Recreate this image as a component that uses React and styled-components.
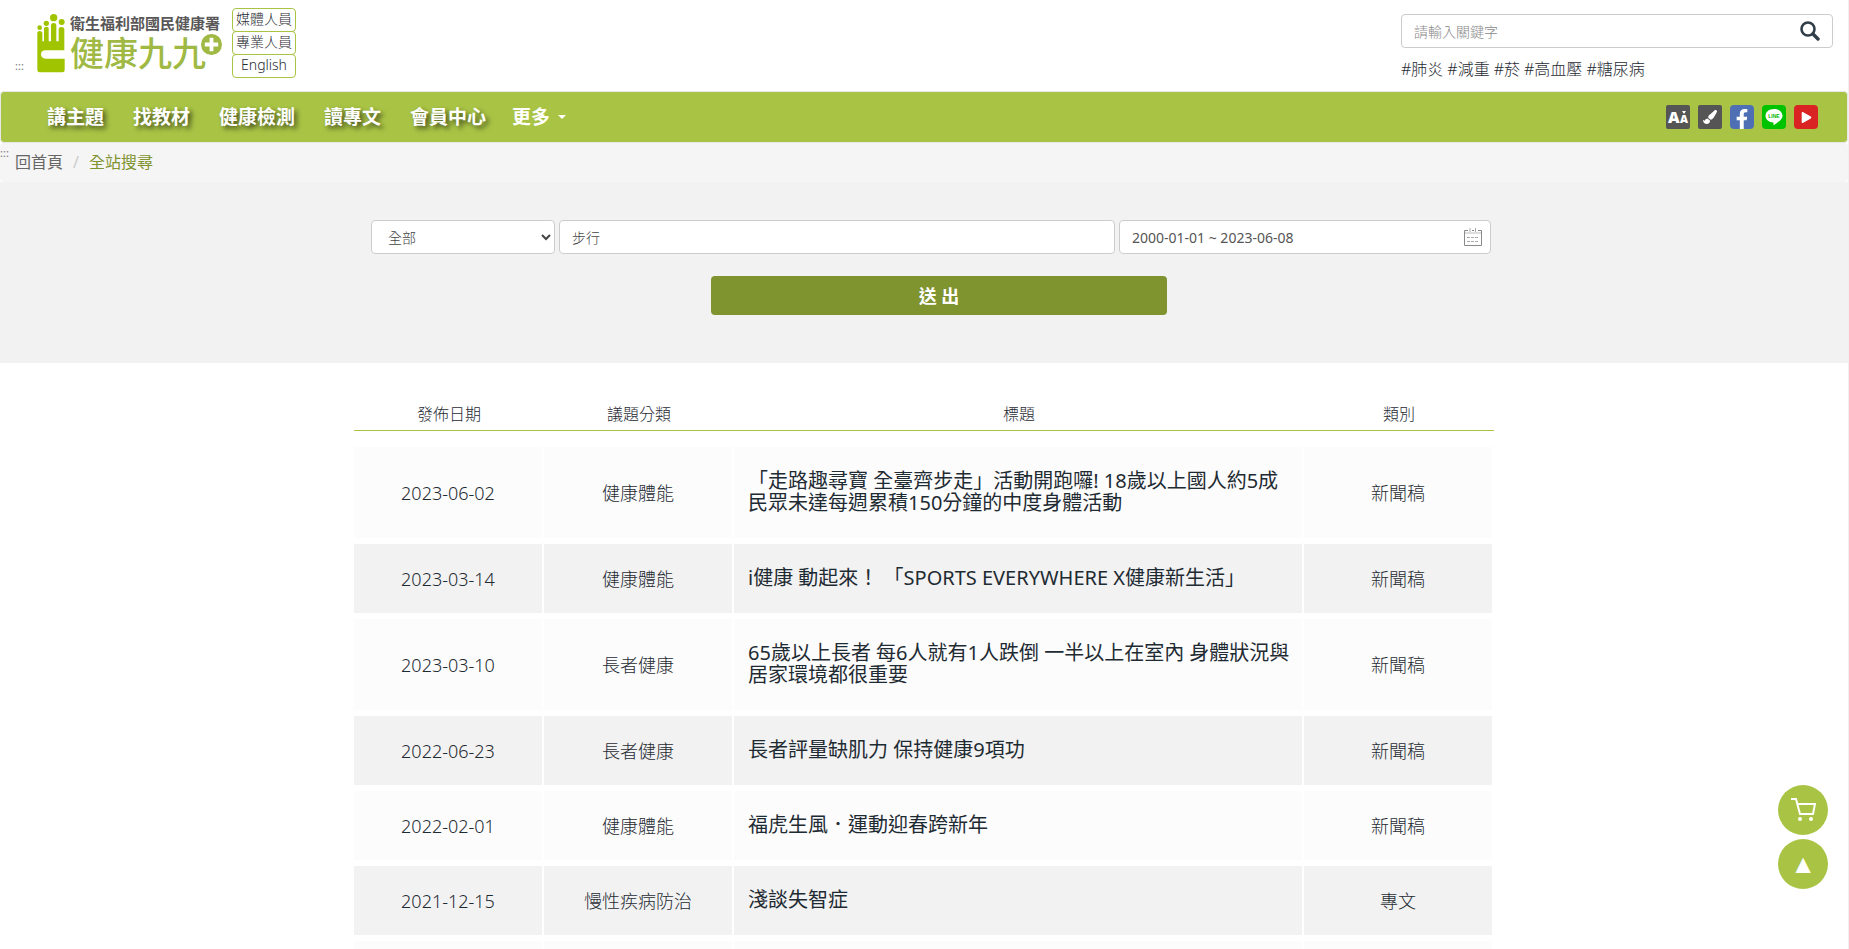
import React from 'react';
import styled, { createGlobalStyle, css } from 'styled-components';
import { FaFacebookF, FaPaintBrush, FaPlay } from 'react-icons/fa';

const GlobalStyle = createGlobalStyle`
  * {
    box-sizing: border-box;
  }

  body {
    margin: 0;
    background: #ffffff;
    color: #1f2b33;
    font-family: 'Noto Sans', 'Noto Sans CJK TC', sans-serif;
    font-size: 16px;
    font-weight: 300;
    line-height: 22px;
  }

  a {
    color: inherit;
    text-decoration: none;
  }

  input, select, button {
    font-family: inherit;
    font-weight: inherit;
  }
`;

const Page = styled.div`
  border-right: 1px solid #f0f0f0;
`;

const Header = styled.header`
  display: flex;
  justify-content: space-between;
  align-items: flex-start;
  height: 91px;
  padding: 0 15px;
`;

const Brand = styled.div`
  display: flex;
  align-items: flex-start;
  padding-top: 8px;
`;

const AccessKey = styled.a`
  color: #777777;
  font-size: 11px;
  font-weight: 400;
  line-height: 16px;
`;

const HeaderAccessKey = styled(AccessKey)`
  width: 22px;
  padding-top: 50px;
`;

const Logo = styled.a`
  display: flex;
  gap: 5px;
  padding-top: 6px;
`;

const LogoText = styled.span`
  display: flex;
  flex-direction: column;
  width: 155px;
  font-family: 'Liberation Sans', 'Noto Sans CJK TC', sans-serif;
`;

const LogoOrg = styled.span`
  color: #595757;
  font-size: 15px;
  font-weight: 700;
  line-height: 20px;
  white-space: nowrap;
`;

const LogoName = styled.span`
  display: flex;
  align-items: flex-start;
  color: #9fb944;
  font-size: 34px;
  font-weight: 500;
  line-height: 40px;
  white-space: nowrap;
`;

const LogoPlus = styled.svg`
  flex: none;
  margin-left: -5px;
`;

const AudienceLinks = styled.nav`
  display: flex;
  flex-direction: column;
  margin-left: 7px;
`;

const AudienceLink = styled.a`
  width: 64px;
  height: 24px;
  border: 1px solid #a9c445;
  border-radius: 4px;
  font-size: 14px;
  line-height: 20px;
  text-align: center;

  & + & {
    margin-top: -1px;
  }
`;

const SiteSearch = styled.form`
  width: 432px;
  padding-top: 14px;
`;

const SearchBox = styled.div`
  display: flex;
  align-items: center;
  height: 34px;
  padding-right: 12px;
  border: 1px solid #cccccc;
  border-radius: 4px;
`;

const SearchInput = styled.input`
  flex: 1;
  min-width: 0;
  padding: 0 12px;
  border: 0;
  outline: 0;
  background: transparent;
  font-size: 14px;

  &::placeholder {
    color: #888888;
  }
`;

const IconButton = styled.button`
  display: flex;
  padding: 0;
  border: 0;
  background: transparent;
  cursor: pointer;
`;

const HotTags = styled.div`
  display: flex;
  gap: 4px;
  margin-top: 10px;
`;

const Navbar = styled.nav`
  display: flex;
  justify-content: space-between;
  align-items: center;
  height: 52px;
  padding: 0 29px 0 31px;
  border: 1px solid #e7e7e7;
  border-radius: 4px;
  background: #a9c445;
`;

const Menu = styled.ul`
  display: flex;
  margin: 0;
  padding: 0;
  list-style: none;
`;

const MenuLink = styled.a`
  display: flex;
  align-items: center;
  padding: 0 14px 0 15px;
  color: #ffffff;
  font-size: 19px;
  font-weight: 700;
  text-shadow: 3px 3px 5px rgba(0, 0, 0, 0.6);
`;

const MoreLink = styled(MenuLink)`
  padding-left: 12px;
  text-shadow: none;
`;

const Caret = styled.span`
  margin-left: 8px;
  border-top: 4px solid #ffffff;
  border-right: 4px solid transparent;
  border-left: 4px solid transparent;
`;

const Tools = styled.div`
  display: flex;
  gap: 8px;
`;

const Tool = styled.a`
  display: flex;
  align-items: ${({ $align }) => $align || 'center'};
  justify-content: center;
  width: 24px;
  height: 24px;
  overflow: hidden;
  border-radius: ${({ $radius }) => $radius || 4}px;
  background: ${({ $color }) => $color};
  color: #ffffff;
`;

const Breadcrumb = styled.nav`
  display: flex;
  height: 39px;
  border-radius: 4px;
  background: #f5f5f5;
  color: #666666;
`;

const BreadcrumbKey = styled(AccessKey)`
  width: 15px;
  padding-top: 2px;
`;

const Trail = styled.ol`
  display: flex;
  margin: 0;
  padding: 8px 0;
  font-weight: 400;
  list-style: none;

  li + li::before {
    content: '/';
    padding: 0 10px;
    color: #cccccc;
  }
`;

const Current = styled.li`
  color: #7f932f;
`;

const FilterPanel = styled.section`
  height: 181px;
  padding-top: 38px;
  background: #f2f2f2;
`;

const FilterForm = styled.form`
  max-width: 1140px;
  margin: 0 auto;
`;

const FilterFields = styled.div`
  display: grid;
  grid-template-columns: 184px 1fr 372px;
  gap: 4px;
  padding: 0 3px 0 17px;
`;

const control = css`
  width: 100%;
  height: 34px;
  padding: 0 12px;
  border: 1px solid #cccccc;
  border-radius: 4px;
  background: #ffffff;
  color: #444444;
  font-size: 14px;
`;

const Select = styled.select`
  ${control}
  padding: 0 0 0 12px;
`;

const TextInput = styled.input`
  ${control}
`;

const DateField = styled.div`
  ${control}
  display: flex;
  align-items: center;
  padding: 0 7px 0 0;
`;

const DateInput = styled(SearchInput)`
  color: #555555;
  font-weight: 400;
`;

const SubmitRow = styled.div`
  display: flex;
  justify-content: center;
  padding: 22px 0 0 30px;
`;

const Submit = styled.button`
  width: 456px;
  height: 39px;
  padding: 0 0 2px;
  border: 0;
  border-radius: 4px;
  background: #7f932f;
  color: #ffffff;
  font-size: 18px;
  font-weight: 700;
`;

const Results = styled.table`
  width: 1140px;
  max-width: 100%;
  margin: 33px auto 0;
  border-collapse: separate;
  border-spacing: 0;
  table-layout: fixed;

  tbody::before {
    content: '';
    display: block;
    height: 16px;
  }
`;

const HeadCell = styled.th`
  width: ${({ $width }) => $width};
  height: 35px;
  padding: 7px 0 5px;
  border-bottom: 1px solid #a9c445;
  font-size: 16px;
  font-weight: 300;
`;

const Row = styled.tr`
  background: #fcfcfc;

  &:nth-child(even) {
    background: #f2f2f2;
  }
`;

const Cell = styled.td`
  height: 75px;
  padding: 24px 0 23px;
  border-right: 2px solid #ffffff;
  border-bottom: 6px solid #ffffff;
  font-size: 18px;
  text-align: center;
`;

const TitleCell = styled(Cell)`
  padding: 23px 8px 24px 14px;
  font-size: 20px;
  font-weight: 400;
  text-align: left;
`;

const Floating = styled.aside`
  position: fixed;
  right: 21px;
  bottom: 60px;
  display: flex;
  flex-direction: column;
  gap: 4px;
`;

const RoundLink = styled.a`
  display: flex;
  align-items: center;
  justify-content: center;
  width: 50px;
  height: 50px;
  border-radius: 50%;
  background: #a9c445;
  color: #ffffff;
  font-family: 'DejaVu Sans', sans-serif;
  font-size: 26px;
`;

const HandMark = () => (
  <svg width="28" height="59" viewBox="0 0 84 177" fill="#a0c400" aria-hidden="true">
    <circle cx="8" cy="41" r="7" />
    <circle cx="28" cy="28" r="8" />
    <circle cx="50" cy="11" r="11" />
    <circle cx="74" cy="24" r="9" />
    <path d="M1 56q0-5 7-5t8 5v26h5V43q0-5 7-5t7 5v39h7V33q0-6 8-6t8 6v49h7V45q0-6 8-6t9 6v64H26q-14 0-14 12t14 13h57v34q0 7-7 7H8q-7 0-7-7z" />
  </svg>
);

const SearchIcon = () => (
  <svg width="20" height="20" viewBox="0 0 20 20" fill="none" stroke="#2f3e48" aria-hidden="true">
    <circle cx="8" cy="8" r="6.5" strokeWidth="2.6" />
    <path d="M13 13l5 5" strokeWidth="3.4" strokeLinecap="round" />
  </svg>
);

const CalendarIcon = () => (
  <svg width="20" height="20" viewBox="0 0 20 20" fill="none" stroke="#8a8a8a" aria-hidden="true">
    <path d="M5 3.5H1.500v15h17v-15H15M9 3.500h2" />
    <path d="M7 1v4M12.500 1v4" stroke="#aaaaaa" />
    <path d="M2 6h16" stroke="#dddddd" strokeWidth="2" />
    <path d="M4 10.500h12M4 14.500h12" stroke="#aaaaaa" strokeDasharray="3 1" />
  </svg>
);

const CartIcon = () => (
  <svg width="26" height="26" viewBox="0 0 26 26" fill="none" stroke="#ffffff" strokeWidth="2" aria-hidden="true">
    <path d="M1 2h5l4 15h13l2-10H7" />
    <circle cx="10" cy="22" r="2" fill="#ffffff" stroke="none" />
    <circle cx="21" cy="22" r="2" fill="#ffffff" stroke="none" />
  </svg>
);

const FontSizeIcon = () => (
  <svg width="24" height="24" viewBox="0 0 24 24" fill="#ffffff" aria-hidden="true">
    <text x="2" y="18" fontFamily="Open Sans, sans-serif" fontSize="16" fontWeight="800">A</text>
    <text x="14" y="18" fontFamily="Open Sans, sans-serif" fontSize="11" fontWeight="800">A</text>
    <path d="M16 6h4l-2 3z" />
  </svg>
);

const LineIcon = () => (
  <svg width="24" height="24" viewBox="0 0 24 24" aria-hidden="true">
    <path d="M12 4c5 0 8.500 2.900 8.500 6.800 0 3.200-3.600 6.300-8.500 9.200-.6.300-.6-.2-.5-2.400C7 17.400 3.500 14.700 3.500 10.800 3.500 6.900 7 4 12 4z" fill="#ffffff" />
    <text x="12" y="13" fill="#00b900" fontFamily="Liberation Sans, sans-serif" fontSize="5" fontWeight="700" textAnchor="middle">LINE</text>
  </svg>
);

const menu = ['講主題', '找教材', '健康檢測', '讀專文', '會員中心'];

const tags = ['#肺炎', '#減重', '#菸', '#高血壓', '#糖尿病'];

const columns = [
  { label: '發佈日期', width: '190px' },
  { label: '議題分類', width: '190px' },
  { label: '標題', width: 'auto' },
  { label: '類別', width: '190px' },
];

const results = [
  {
    date: '2023-06-02',
    topic: '健康體能',
    title: '「走路趣尋寶 全臺齊步走」活動開跑囉! 18歲以上國人約5成民眾未達每週累積150分鐘的中度身體活動',
    type: '新聞稿',
  },
  { date: '2023-03-14', topic: '健康體能', title: 'i健康 動起來！ 「SPORTS EVERYWHERE X健康新生活」', type: '新聞稿' },
  {
    date: '2023-03-10',
    topic: '長者健康',
    title: '65歲以上長者 每6人就有1人跌倒 一半以上在室內 身體狀況與居家環境都很重要',
    type: '新聞稿',
  },
  { date: '2022-06-23', topic: '長者健康', title: '長者評量缺肌力 保持健康9項功', type: '新聞稿' },
  { date: '2022-02-01', topic: '健康體能', title: '福虎生風．運動迎春跨新年', type: '新聞稿' },
  { date: '2021-12-15', topic: '慢性疾病防治', title: '淺談失智症', type: '專文' },
  { date: '', topic: '', title: '', type: '' },
];

const App = () => {
  return (
    <Page lang="zh-Hant">
      <GlobalStyle />
      <Header>
        <Brand>
          <HeaderAccessKey href="#top">:::</HeaderAccessKey>
          <Logo href="#home">
            <HandMark />
            <LogoText>
              <LogoOrg>衛生福利部國民健康署</LogoOrg>
              <LogoName>
                健康九九
                <LogoPlus width="21" height="21" viewBox="0 0 22 22" aria-hidden="true">
                  <circle cx="11" cy="11" r="11" fill="#9fb944" />
                  <path d="M11 4v14M4 11h14" stroke="#ffffff" strokeWidth="4" />
                </LogoPlus>
              </LogoName>
            </LogoText>
          </Logo>
          <AudienceLinks>
            <AudienceLink href="#media">媒體人員</AudienceLink>
            <AudienceLink href="#professional">專業人員</AudienceLink>
            <AudienceLink href="#english">English</AudienceLink>
          </AudienceLinks>
        </Brand>
        <SiteSearch>
          <SearchBox>
            <SearchInput type="text" placeholder="請輸入關鍵字" aria-label="請輸入關鍵字" />
            <IconButton type="button" aria-label="搜尋">
              <SearchIcon />
            </IconButton>
          </SearchBox>
          <HotTags>
            {tags.map((tag) => (
              <a key={tag} href="#tag">{tag}</a>
            ))}
          </HotTags>
        </SiteSearch>
      </Header>

      <Navbar>
        <Menu>
          {menu.map((item) => (
            <li key={item}>
              <MenuLink href="#menu">{item}</MenuLink>
            </li>
          ))}
          <li>
            <MoreLink href="#more">
              更多
              <Caret />
            </MoreLink>
          </li>
        </Menu>
        <Tools>
          <Tool href="#font" $color="#555555" $radius={2} aria-label="字級">
            <FontSizeIcon />
          </Tool>
          <Tool href="#theme" $color="#555555" $radius={2} aria-label="配色">
            <FaPaintBrush size={14} />
          </Tool>
          <Tool href="#facebook" $color="#4f6fb5" $align="flex-end" aria-label="Facebook">
            <FaFacebookF size={20} />
          </Tool>
          <Tool href="#line" $color="#00c300" aria-label="LINE">
            <LineIcon />
          </Tool>
          <Tool href="#youtube" $color="#da2424" aria-label="YouTube">
            <FaPlay size={11} />
          </Tool>
        </Tools>
      </Navbar>

      <Breadcrumb>
        <BreadcrumbKey href="#content">:::</BreadcrumbKey>
        <Trail>
          <li>
            <a href="#home">回首頁</a>
          </li>
          <Current>全站搜尋</Current>
        </Trail>
      </Breadcrumb>

      <FilterPanel>
        <FilterForm>
          <FilterFields>
            <Select aria-label="類別">
              <option>全部</option>
            </Select>
            <TextInput type="text" defaultValue="步行" aria-label="關鍵字" />
            <DateField>
              <DateInput type="text" defaultValue="2000-01-01 ~ 2023-06-08" aria-label="日期" />
              <CalendarIcon />
            </DateField>
          </FilterFields>
          <SubmitRow>
            <Submit type="button">送 出</Submit>
          </SubmitRow>
        </FilterForm>
      </FilterPanel>

      <Results>
        <thead>
          <tr>
            {columns.map((column) => (
              <HeadCell key={column.label} $width={column.width}>{column.label}</HeadCell>
            ))}
          </tr>
        </thead>
        <tbody>
          {results.map((item) => (
            <Row key={item.date}>
              <Cell>{item.date}</Cell>
              <Cell>{item.topic}</Cell>
              <TitleCell>
                <a href="#article">{item.title}</a>
              </TitleCell>
              <Cell>{item.type}</Cell>
            </Row>
          ))}
        </tbody>
      </Results>

      <Floating>
        <RoundLink href="#cart" aria-label="購物車">
          <CartIcon />
        </RoundLink>
        <RoundLink href="#top">▲</RoundLink>
      </Floating>
    </Page>
  );
};

export default App;
